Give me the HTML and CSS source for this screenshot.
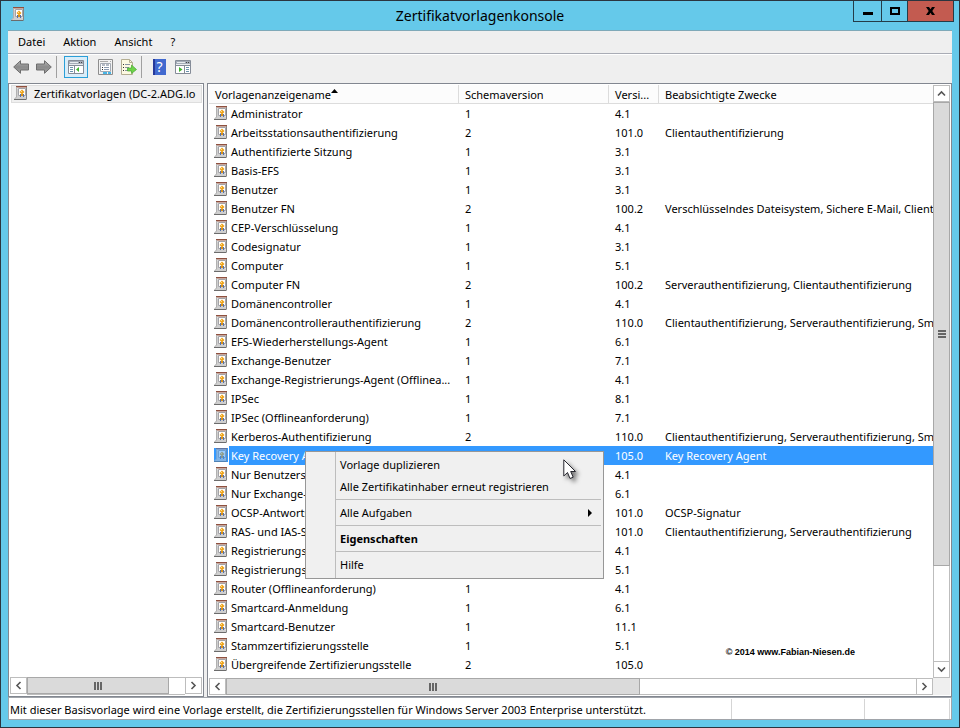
FILE: index.html
```
<!DOCTYPE html>
<html lang="de">
<head>
    <meta charset="utf-8">
    <title>Zertifikatvorlagenkonsole</title>
    <link rel="stylesheet" href="styles.css">
</head>
<body>
    <!-- shared icons -->
    <svg class="defs" width="0" height="0">
        <symbol id="cert" viewBox="0 0 14 14">
            <path d="M2 1h11v11H2z" fill="#ededed"/>
            <path d="M2 1v10L0 13.500h12L13 12z" fill="#cfcfcf"/>
            <path d="M2.500 1v10L.5 13" fill="none" stroke="#b0b0b0"/>
            <path d="M0 13.500h12.500" stroke="#6c6c6c"/>
            <path d="M12.500 1v12" stroke="#858585"/>
            <path d="M2 .5h11" stroke="#8f5140"/>
            <path d="M3 1.500h9" stroke="#c9a79c"/>
            <path d="M4.500 2.500h7v7h-7z" fill="#fff" stroke="#a3a3a8"/>
            <path d="M6 8h1v3H6zM9 8h1v3H9z" fill="#5570a8"/>
            <path d="M8 3.500L10.500 6 8 8.500 5.500 6z" fill="#eda21c"/>
            <path d="M7 5h1v1H7z" fill="#ffe18a"/>
            <path d="M7 8h2v2H7z" fill="#d8921a"/>
        </symbol>
        <symbol id="left" viewBox="0 0 9 9"><path d="M6.500 1L3 4.500 6.500 8" fill="none" stroke="#555" stroke-width="1.600"/></symbol>
        <symbol id="right" viewBox="0 0 9 9"><path d="M2.500 1L6 4.500 2.500 8" fill="none" stroke="#555" stroke-width="1.600"/></symbol>
        <symbol id="up" viewBox="0 0 9 9"><path d="M1 6.500L4.500 3 8 6.500" fill="none" stroke="#555" stroke-width="1.600"/></symbol>
        <symbol id="down" viewBox="0 0 9 9"><path d="M1 2.500L4.500 6 8 2.500" fill="none" stroke="#555" stroke-width="1.600"/></symbol>
        <linearGradient id="steel" x1="0" y1="0" x2="0" y2="1">
            <stop offset="0" stop-color="#b5b5b5"/>
            <stop offset=".5" stop-color="#8a8a8a"/>
            <stop offset="1" stop-color="#a2a2a2"/>
        </linearGradient>
    </svg>

    <div class="window">
        <header class="titlebar">
            <svg class="app-icon"><use href="#cert"/></svg>
            <h1>Zertifikatvorlagenkonsole</h1>
            <div class="window-buttons">
                <button class="min" aria-label="Minimieren"><svg width="10" height="3"><path d="M0 0h10v3H0z"/></svg></button>
                <button class="max" aria-label="Maximieren"><svg width="10" height="8"><path d="M1 1h8v6H1z" fill="none" stroke="#000" stroke-width="2"/></svg></button>
                <button class="close" aria-label="Schließen"><svg width="9" height="8"><path d="M0 0h3l1.500 2.300L6 0h3L6.300 4 9 8H6L4.500 5.700 3 8H0l2.700-4z"/></svg></button>
            </div>
        </header>

        <nav class="menubar">
            <button>Datei</button>
            <button>Aktion</button>
            <button>Ansicht</button>
            <button>?</button>
        </nav>

        <div class="toolbar">
            <button aria-label="Zurück"><svg width="16" height="14"><path d="M.7 7L7.500.7V4H15.500v6H7.500v3.300z" fill="url(#steel)" stroke="#6d6d6d"/></svg></button>
            <button aria-label="Vorwärts"><svg width="16" height="14"><path d="M15.300 7L8.500.7V4H.5v6h8v3.300z" fill="url(#steel)" stroke="#6d6d6d"/></svg></button>
            <span class="divider"></span>
            <button class="pressed" aria-label="Konsolenstruktur">
                <svg width="16" height="14">
                    <path d="M.5.5h15v13H.5z" fill="#fff" stroke="#858c98"/>
                    <path d="M1 1h14v4H1z" fill="#a4acb8"/>
                    <path d="M2 2.500h8M1 4.500h14" stroke="#e8ebef"/><path d="M11 2.500h1M13 2.500h1" stroke="#444"/>
                    <path d="M0 5.500h16M6.500 6v8" stroke="#858c98"/>
                    <path d="M2 7.500h3M2 9.500h3M2 11.500h3" stroke="#6b93ad"/>
                    <path d="M11 7v5L8 9.500z" fill="#3fb52e"/>
                </svg>
            </button>
            <button class="wide" aria-label="Eigenschaften">
                <svg width="15" height="16">
                    <path d="M.5.500h14v15H.5z" fill="#f2f2f2" stroke="#8e8e8e"/>
                    <path d="M2 2.500h8M12 2.500h1" stroke="#aaa"/>
                    <path d="M2.500 4.500h10v8h-10z" fill="#fff" stroke="#a4aab3"/>
                    <path d="M4 5h3v2H4zM8 5h3v2H8z" fill="#b3bac5"/>
                    <path d="M4 8.500h1M4 10.500h1" stroke="#333"/>
                    <path d="M6 8.500h5M6 10.500h5" stroke="#8a9ab0"/>
                    <path d="M5 14h4M10 14h3" stroke="#47b5e6" stroke-width="2"/>
                </svg>
            </button>
            <button aria-label="Liste exportieren">
                <svg width="16" height="16">
                    <path d="M.5.5h8l3 3v12H.5z" fill="#fdf9e2" stroke="#b4ae92"/>
                    <path d="M8.500.5v3h3" fill="none" stroke="#b4ae92"/>
                    <path d="M2 5.500h1M2 8.500h1M2 11.500h1" stroke="#333"/>
                    <path d="M4 5.500h5M4 8.500h4M4 11.500h4" stroke="#8a93a0"/>
                    <path d="M6.500 9h4V6l5 4.500-5 4V12h-4z" fill="#6fd348" stroke="#43a830" stroke-width=".7"/>
                </svg>
            </button>
            <span class="divider"></span>
            <button aria-label="Hilfe"><span class="help-icon">?</span></button>
            <button aria-label="Aktionsbereich">
                <svg width="16" height="14">
                    <path d="M.5.5h15v13H.5z" fill="#fff" stroke="#858c98"/>
                    <path d="M1 1h14v4H1z" fill="#a4acb8"/>
                    <path d="M2 2.500h8M1 4.500h14" stroke="#e8ebef"/><path d="M11 2.500h1M13 2.500h1" stroke="#444"/>
                    <path d="M0 5.500h16M9.500 6v8" stroke="#858c98"/>
                    <path d="M11 7.500h3M11 9.500h3M11 11.500h3" stroke="#6b93ad"/>
                    <path d="M4 7v5l3.500-2.500z" fill="#3fb52e"/>
                </svg>
            </button>
        </div>

        <main class="panes">
            <section class="pane tree-pane">
                <div class="tree">
                    <div class="node"><svg class="icon"><use href="#cert"/></svg><span>Zertifikatvorlagen (DC-2.ADG.lo</span></div>
                </div>
                <div class="hscroll">
                    <button aria-label="Nach links"><svg><use href="#left"/></svg></button>
                    <div class="track"><div class="thumb tree-thumb"><i class="grip"></i></div></div>
                    <button aria-label="Nach rechts"><svg><use href="#right"/></svg></button>
                </div>
            </section>

            <section class="pane list-pane">
                <div class="list">
                    <table>
                        <colgroup><col class="c-name"><col class="c-schema"><col class="c-version"><col></colgroup>
                        <thead>
                            <tr>
                                <th>Vorlagenanzeigename<svg class="sort" width="7" height="4"><path d="M3.500 0L7 4H0z"/></svg></th>
                                <th>Schemaversion</th>
                                <th>Versi...</th>
                                <th>Beabsichtigte Zwecke</th>
                            </tr>
                        </thead>
                        <tbody>
                            <tr><td><div class="name"><svg class="icon"><use href="#cert"/></svg><span>Administrator</span></div></td><td>1</td><td>4.1</td><td></td></tr>
                            <tr><td><div class="name"><svg class="icon"><use href="#cert"/></svg><span>Arbeitsstationsauthentifizierung</span></div></td><td>2</td><td>101.0</td><td>Clientauthentifizierung</td></tr>
                            <tr><td><div class="name"><svg class="icon"><use href="#cert"/></svg><span>Authentifizierte Sitzung</span></div></td><td>1</td><td>3.1</td><td></td></tr>
                            <tr><td><div class="name"><svg class="icon"><use href="#cert"/></svg><span>Basis-EFS</span></div></td><td>1</td><td>3.1</td><td></td></tr>
                            <tr><td><div class="name"><svg class="icon"><use href="#cert"/></svg><span>Benutzer</span></div></td><td>1</td><td>3.1</td><td></td></tr>
                            <tr><td><div class="name"><svg class="icon"><use href="#cert"/></svg><span>Benutzer FN</span></div></td><td>2</td><td>100.2</td><td>Verschlüsselndes Dateisystem, Sichere E-Mail, Clientauthentifizierung</td></tr>
                            <tr><td><div class="name"><svg class="icon"><use href="#cert"/></svg><span>CEP-Verschlüsselung</span></div></td><td>1</td><td>4.1</td><td></td></tr>
                            <tr><td><div class="name"><svg class="icon"><use href="#cert"/></svg><span>Codesignatur</span></div></td><td>1</td><td>3.1</td><td></td></tr>
                            <tr><td><div class="name"><svg class="icon"><use href="#cert"/></svg><span>Computer</span></div></td><td>1</td><td>5.1</td><td></td></tr>
                            <tr><td><div class="name"><svg class="icon"><use href="#cert"/></svg><span>Computer FN</span></div></td><td>2</td><td>100.2</td><td>Serverauthentifizierung, Clientauthentifizierung</td></tr>
                            <tr><td><div class="name"><svg class="icon"><use href="#cert"/></svg><span>Domänencontroller</span></div></td><td>1</td><td>4.1</td><td></td></tr>
                            <tr><td><div class="name"><svg class="icon"><use href="#cert"/></svg><span>Domänencontrollerauthentifizierung</span></div></td><td>2</td><td>110.0</td><td>Clientauthentifizierung, Serverauthentifizierung, Smartcard-Anmeldung</td></tr>
                            <tr><td><div class="name"><svg class="icon"><use href="#cert"/></svg><span>EFS-Wiederherstellungs-Agent</span></div></td><td>1</td><td>6.1</td><td></td></tr>
                            <tr><td><div class="name"><svg class="icon"><use href="#cert"/></svg><span>Exchange-Benutzer</span></div></td><td>1</td><td>7.1</td><td></td></tr>
                            <tr><td><div class="name"><svg class="icon"><use href="#cert"/></svg><span>Exchange-Registrierungs-Agent (Offlinea...</span></div></td><td>1</td><td>4.1</td><td></td></tr>
                            <tr><td><div class="name"><svg class="icon"><use href="#cert"/></svg><span>IPSec</span></div></td><td>1</td><td>8.1</td><td></td></tr>
                            <tr><td><div class="name"><svg class="icon"><use href="#cert"/></svg><span>IPSec (Offlineanforderung)</span></div></td><td>1</td><td>7.1</td><td></td></tr>
                            <tr><td><div class="name"><svg class="icon"><use href="#cert"/></svg><span>Kerberos-Authentifizierung</span></div></td><td>2</td><td>110.0</td><td>Clientauthentifizierung, Serverauthentifizierung, Smartcard-Anmeldung</td></tr>
                            <tr class="selected"><td><div class="name"><svg class="icon"><use href="#cert"/></svg><span>Key Recovery Agent</span></div></td><td></td><td>105.0</td><td>Key Recovery Agent</td></tr>
                            <tr><td><div class="name"><svg class="icon"><use href="#cert"/></svg><span>Nur Benutzersignatur</span></div></td><td></td><td>4.1</td><td></td></tr>
                            <tr><td><div class="name"><svg class="icon"><use href="#cert"/></svg><span>Nur Exchange-Signatur</span></div></td><td></td><td>6.1</td><td></td></tr>
                            <tr><td><div class="name"><svg class="icon"><use href="#cert"/></svg><span>OCSP-Antwortsignatur</span></div></td><td></td><td>101.0</td><td>OCSP-Signatur</td></tr>
                            <tr><td><div class="name"><svg class="icon"><use href="#cert"/></svg><span>RAS- und IAS-Server</span></div></td><td></td><td>101.0</td><td>Clientauthentifizierung, Serverauthentifizierung</td></tr>
                            <tr><td><div class="name"><svg class="icon"><use href="#cert"/></svg><span>Registrierungs-Agent</span></div></td><td></td><td>4.1</td><td></td></tr>
                            <tr><td><div class="name"><svg class="icon"><use href="#cert"/></svg><span>Registrierungs-Agent</span></div></td><td></td><td>5.1</td><td></td></tr>
                            <tr><td><div class="name"><svg class="icon"><use href="#cert"/></svg><span>Router (Offlineanforderung)</span></div></td><td>1</td><td>4.1</td><td></td></tr>
                            <tr><td><div class="name"><svg class="icon"><use href="#cert"/></svg><span>Smartcard-Anmeldung</span></div></td><td>1</td><td>6.1</td><td></td></tr>
                            <tr><td><div class="name"><svg class="icon"><use href="#cert"/></svg><span>Smartcard-Benutzer</span></div></td><td>1</td><td>11.1</td><td></td></tr>
                            <tr><td><div class="name"><svg class="icon"><use href="#cert"/></svg><span>Stammzertifizierungsstelle</span></div></td><td>1</td><td>5.1</td><td></td></tr>
                            <tr><td><div class="name"><svg class="icon"><use href="#cert"/></svg><span>Übergreifende Zertifizierungsstelle</span></div></td><td>2</td><td>105.0</td><td></td></tr>
                            <tr><td><div class="name"><svg class="icon"><use href="#cert"/></svg></div></td><td></td><td></td><td></td></tr>
                        </tbody>
                    </table>
                </div>
                <div class="vscroll">
                    <button aria-label="Nach oben"><svg><use href="#up"/></svg></button>
                    <div class="track"><div class="thumb list-vthumb"><i class="grip"></i></div></div>
                    <button aria-label="Nach unten"><svg><use href="#down"/></svg></button>
                </div>
                <div class="hscroll">
                    <button aria-label="Nach links"><svg><use href="#left"/></svg></button>
                    <div class="track"><div class="thumb list-thumb"><i class="grip"></i></div></div>
                    <button aria-label="Nach rechts"><svg><use href="#right"/></svg></button>
                </div>
                <div class="watermark">© 2014 www.Fabian-Niesen.de</div>
            </section>
        </main>

        <footer class="statusbar">
            <span class="message">Mit dieser Basisvorlage wird eine Vorlage erstellt, die Zertifizierungsstellen für Windows Server 2003 Enterprise unterstützt.</span>
            <span class="slot-a"></span>
            <span class="slot-b"></span>
        </footer>

        <div class="context-menu" role="menu">
            <button role="menuitem">Vorlage duplizieren</button>
            <button role="menuitem">Alle Zertifikatinhaber erneut registrieren</button>
            <hr>
            <button role="menuitem">Alle Aufgaben<svg width="4" height="8"><path d="M0 0l4 4-4 4z"/></svg></button>
            <hr>
            <button role="menuitem" class="default">Eigenschaften</button>
            <hr>
            <button role="menuitem">Hilfe</button>
        </div>

        <svg class="cursor" width="24" height="28"><path d="M.8.800V17l3.700-3.500L7 19.500l3.200-1.300-2.500-5.700h4.800z" fill="#fff" stroke="#26262e"/></svg>
    </div>
</body>
</html>
```
FILE: styles.css
```
* {
    box-sizing: border-box;
}
body {
    margin: 0;
    font-family: "Noto Sans", "Segoe UI", sans-serif;
    font-size: 11px;
    line-height: 18px;
    color: #000;
}
button {
    font: inherit;
    color: inherit;
    background: none;
    border: 0;
    padding: 0;
    margin: 0;
}
svg {
    display: block;
    flex: none;
}
.defs {
    position: absolute;
}
.window {
    position: relative;
    display: flex;
    flex-direction: column;
    height: 100vh;
    padding: 0 7px 7px;
    background: #65c9ea;
    border: 1px solid #2b353f;
}

/* title bar */
.titlebar {
    display: grid;
    grid-template-columns: 1fr auto 1fr;
    align-items: start;
    height: 29px;
    flex: none;
}
.app-icon {
    width: 14px;
    height: 14px;
    margin: 6px 0 0 3px;
}
h1 {
    margin: 0;
    font-size: 14px;
    font-weight: normal;
    line-height: 29px;
}
.window-buttons {
    display: flex;
    justify-self: end;
    height: 21px;
    margin-right: -2px;
    border: 1px solid #243c48;
    border-top: 0;
}
.window-buttons button {
    display: flex;
    align-items: center;
    justify-content: center;
    width: 26px;
}
.window-buttons .min {
    align-items: flex-end;
    width: 27px;
    padding-bottom: 6px;
}
.window-buttons button + button {
    border-left: 1px solid #243c48;
}
.window-buttons .close {
    width: 46px;
    background: #c35b50;
}

/* menu and toolbar */
.menubar {
    display: flex;
    flex: none;
    height: 24px;
    padding: 0 1px;
    background: #efefef;
    border-top: 1px solid #7fa9b8;
    border-bottom: 1px solid #a9acb5;
}
.menubar button {
    padding: 0 9px;
}
.toolbar {
    display: flex;
    flex: none;
    align-items: center;
    height: 29px;
    padding: 0 1px 4px;
    background: #efefef;
    border-top: 1px solid #fff;
}
.toolbar button {
    display: flex;
    align-items: center;
    justify-content: center;
    width: 23px;
    height: 22px;
}
.toolbar .pressed {
    width: 24px;
    margin-right: 5px;
    background: #d9edf9;
    border: 1px solid #2a9fd8;
}
.toolbar .wide {
    width: 24px;
}
.divider {
    width: 1px;
    height: 22px;
    margin: 0 7px 0 1px;
    background: #a0a0a0;
}
.wide ~ .divider {
    margin: 0 6px 0 1px;
}
.help-icon {
    width: 13px;
    height: 16px;
    color: #fff;
    background: linear-gradient(90deg, #26399a 2px, #4169cf 2px);
    font-size: 14px;
    line-height: 16px;
}

/* panes */
.panes {
    display: flex;
    flex: 1;
    gap: 3px;
    min-height: 0;
    background: #efefef;
}
.pane {
    padding: 1px;
    background: #fff;
    border: 1px solid #828790;
}
.tree-pane {
    display: flex;
    flex-direction: column;
    flex: none;
    width: 196px;
}
.tree {
    flex: 1;
    overflow: hidden;
}
.node {
    display: flex;
    gap: 6px;
    height: 18px;
    padding-left: 2px;
    margin-left: 1px;
    overflow: hidden;
    background: #f0f0f0;
    border: 1px solid #dedede;
    line-height: 16px;
    white-space: nowrap;
}
.icon {
    width: 14px;
    height: 14px;
}
.list-pane {
    position: relative;
    display: grid;
    flex: 1;
    grid-template-columns: 1fr 17px;
    grid-template-rows: 1fr 17px;
    min-width: 0;
    background: #fff;
}
.list {
    min-width: 0;
    min-height: 0;
    overflow: hidden;
}
table {
    width: 100%;
    table-layout: fixed;
    border-collapse: separate;
    border-spacing: 0;
}
.c-name {
    width: 250px;
}
.c-schema {
    width: 150px;
}
.c-version {
    width: 50px;
}
th,
td {
    height: 19px;
    padding: 0 0 0 6px;
    overflow: hidden;
    font-weight: normal;
    line-height: 19px;
    text-align: left;
    white-space: nowrap;
}
th {
    padding-top: 1px;
    line-height: 17px;
    background: #fcfcfc;
    border-right: 1px solid #dcdcdc;
    border-bottom: 1px solid #dcdcdc;
}
th:last-child {
    border-right: 0;
}
td:first-child {
    padding-left: 5px;
}
.sort {
    display: inline-block;
    vertical-align: 6px;
}
.name {
    display: flex;
    align-items: flex-start;
    gap: 1px;
}
.name .icon {
    margin-top: 2px;
}
.name span {
    flex: 1;
    height: 19px;
    padding-left: 2px;
}
.selected td:not(:first-child),
.selected .name span {
    color: #fff;
    background: #3399ff;
}
.selected .icon {
    background: #3399ff;
}
.selected .icon use {
    opacity: 0.5;
}

/* scrollbars */
.hscroll,
.vscroll {
    display: flex;
    flex: none;
}
.vscroll {
    flex-direction: column;
}
.hscroll button,
.vscroll button {
    display: flex;
    flex: none;
    align-items: center;
    justify-content: center;
    width: 17px;
    height: 17px;
    border: 1px solid #bdbdbd;
}
.hscroll svg,
.vscroll svg {
    width: 9px;
    height: 9px;
}
.track {
    flex: 1;
}
.hscroll .track {
    border-top: 1px solid #bdbdbd;
    border-bottom: 1px solid #bdbdbd;
}
.vscroll .track {
    border-left: 1px solid #bdbdbd;
    border-right: 1px solid #bdbdbd;
}
.thumb {
    display: flex;
    align-items: center;
    justify-content: center;
    background: #dadada;
    border: 1px solid #a8a8a8;
}
.hscroll .thumb {
    height: 17px;
    margin-top: -1px;
}
.vscroll .thumb {
    margin: 0 -1px;
}
.tree-thumb {
    width: 90%;
}
.list-thumb {
    width: 60%;
}
.list-vthumb {
    height: 83%;
}
.grip {
    width: 8px;
    height: 8px;
    background: repeating-linear-gradient(90deg, #666 0 2px, transparent 2px 3px);
}
.vscroll .grip {
    background: repeating-linear-gradient(#666 0 2px, transparent 2px 3px);
}
.list-pane::after {
    content: "";
    background: #efefef;
}
.watermark {
    position: absolute;
    right: 96px;
    bottom: 37px;
    font: bold 9px/14px "Liberation Sans", Arial, sans-serif;
}

/* status bar */
.statusbar {
    display: flex;
    flex: none;
    height: 23px;
    padding: 1px 1px 0;
    background: #fff;
    border: 1px solid #a0a4aa;
}
.statusbar span {
    height: 20px;
    line-height: 22px;
    border-right: 1px solid #d5d5d5;
}
.message {
    flex: 1;
    min-width: 0;
    overflow: hidden;
    white-space: nowrap;
}
.slot-a {
    width: 133px;
}
.slot-b {
    width: 85px;
}

/* context menu */
.context-menu {
    position: absolute;
    top: 450px;
    left: 304px;
    width: 299px;
    padding: 2px;
    background: linear-gradient(90deg, transparent 29px, #bdbdbd 29px 30px, transparent 30px) #f0f0f0;
    border: 1px solid #979797;
}
.context-menu button {
    display: flex;
    align-items: center;
    justify-content: space-between;
    width: 100%;
    height: 22px;
    padding: 0 9px 0 32px;
}
.context-menu .default {
    font-weight: bold;
}
.context-menu hr {
    height: 1px;
    margin: 1px 0 2px 28px;
    background: #bdbdbd;
    border: 0;
}
.cursor {
    position: absolute;
    top: 458px;
    left: 562px;
    filter: drop-shadow(3px 3px 2px rgba(0, 0, 0, 0.5));
}
```
